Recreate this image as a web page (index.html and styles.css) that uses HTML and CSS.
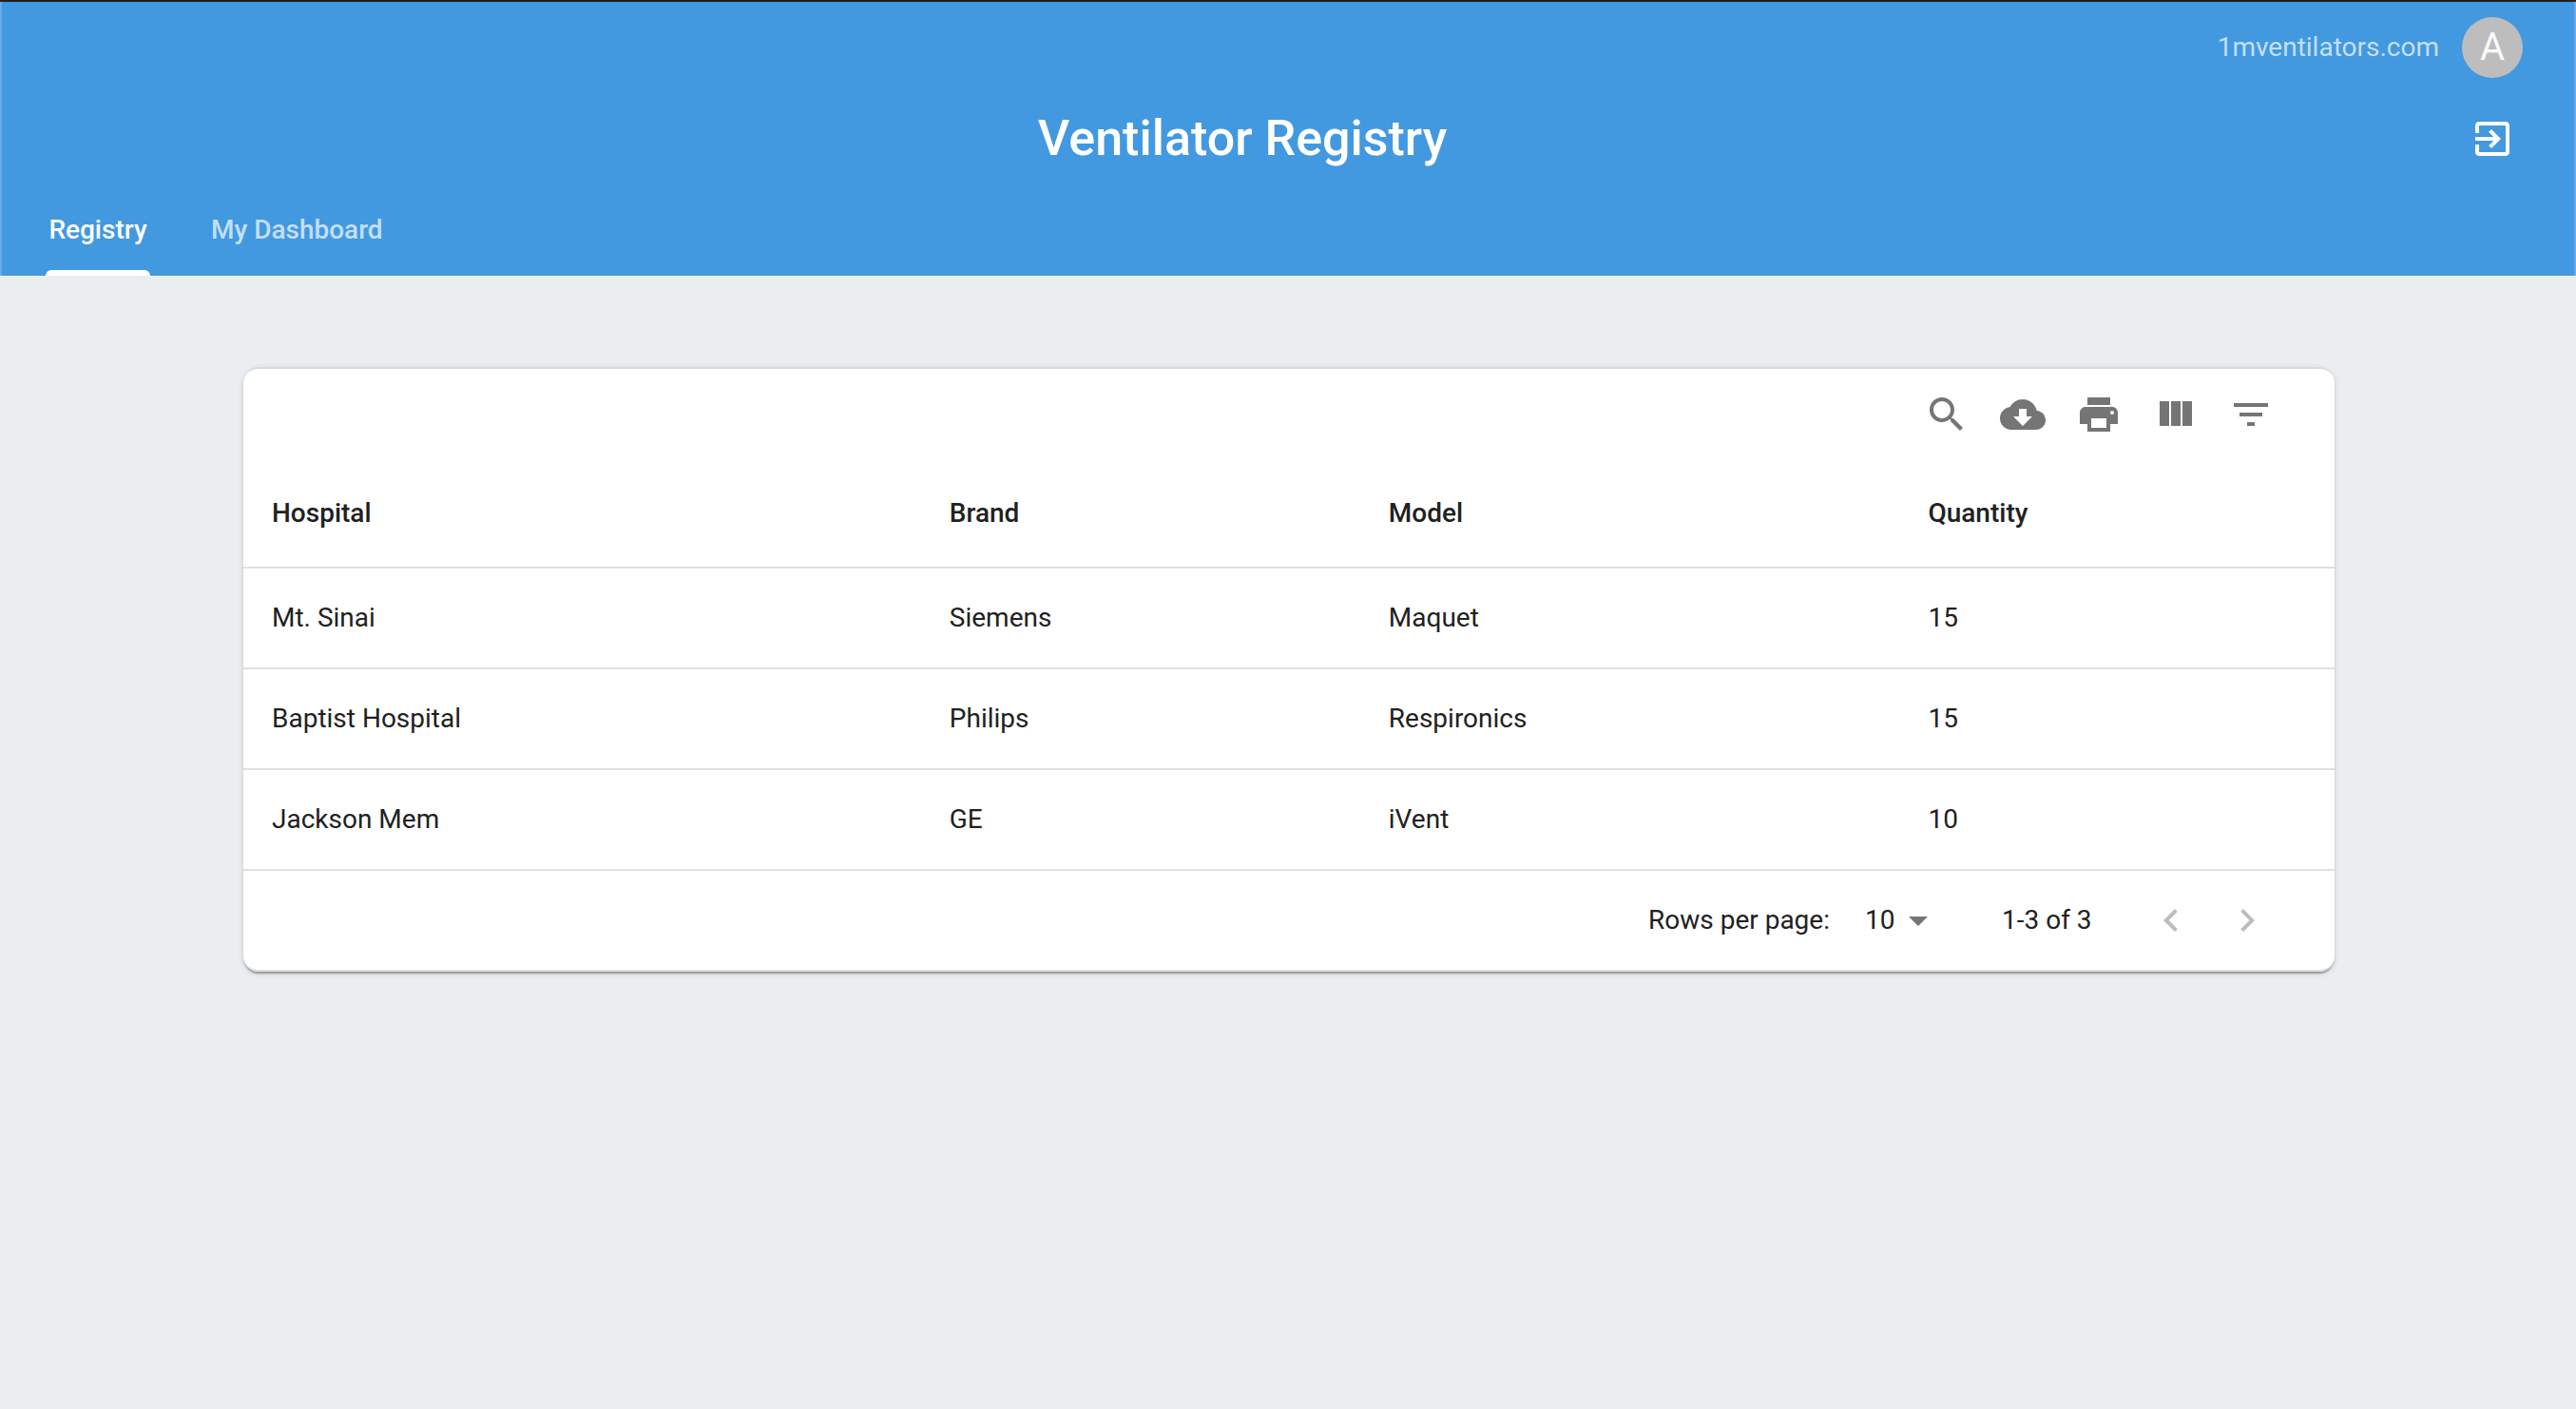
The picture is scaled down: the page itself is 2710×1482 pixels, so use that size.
FILE: index.html
```html
<!DOCTYPE html>
<html lang="en">
<head>
<meta charset="utf-8">
<meta name="viewport" content="width=device-width, initial-scale=1">
<title>Ventilator Registry</title>
<link rel="stylesheet" href="styles.css">
</head>
<body>
<header class="app-header">
  <div class="bar bar-account">
    <a class="site-link" href="#">1mventilators.com</a>
    <button class="avatar" type="button" aria-label="Account">A</button>
  </div>
  <div class="bar bar-title">
    <h1 class="title">Ventilator Registry</h1>
    <button class="icon-button sign-out" type="button" aria-label="Sign out">
      <svg class="icon" viewBox="0 0 24 24"><path d="M10.09 15.59L11.5 17l5-5-5-5-1.41 1.41L12.67 11H3v2h9.67l-2.58 2.59zM19 3H5c-1.11 0-2 .9-2 2v4h2V5h14v14H5v-4H3v4c0 1.1.89 2 2 2h14c1.1 0 2-.9 2-2V5c0-1.1-.9-2-2-2z"/></svg>
    </button>
  </div>
  <nav class="tabs">
    <a class="tab tab-active" href="#" aria-current="page">Registry</a>
    <a class="tab" href="#">My Dashboard</a>
  </nav>
</header>

<main class="content">
  <section class="card">
    <div class="toolbar">
      <button class="icon-button" type="button" aria-label="Search">
        <svg class="icon" viewBox="0 0 24 24"><path d="M15.5 14h-.79l-.28-.27C15.41 12.59 16 11.11 16 9.5 16 5.91 13.09 3 9.5 3S3 5.91 3 9.5 5.91 16 9.5 16c1.61 0 3.09-.59 4.23-1.57l.27.28v.79l5 4.99L20.49 19l-4.99-5zm-6 0C7.01 14 5 11.99 5 9.5S7.01 5 9.5 5 14 7.01 14 9.5 11.99 14 9.5 14z"/></svg>
      </button>
      <button class="icon-button" type="button" aria-label="Download CSV">
        <svg class="icon" viewBox="0 0 24 24"><path d="M19.35 10.04C18.67 6.59 15.64 4 12 4 9.11 4 6.6 5.64 5.35 8.04 2.34 8.36 0 10.91 0 14c0 3.31 2.69 6 6 6h13c2.76 0 5-2.24 5-5 0-2.64-2.05-4.78-4.65-4.96zM17 13l-5 5-5-5h3V9h4v4h3z"/></svg>
      </button>
      <button class="icon-button" type="button" aria-label="Print">
        <svg class="icon" viewBox="0 0 24 24"><path d="M19 8H5c-1.66 0-3 1.34-3 3v6h4v4h12v-4h4v-6c0-1.66-1.34-3-3-3zm-3 11H8v-5h8v5zm3-7c-.55 0-1-.45-1-1s.45-1 1-1 1 .45 1 1-.45 1-1 1zm-1-9H6v4h12V3z"/></svg>
      </button>
      <button class="icon-button" type="button" aria-label="View columns">
        <svg class="icon" viewBox="0 0 24 24"><path d="M10 18h5V5h-5v13zm-6 0h5V5H4v13zM16 5v13h5V5h-5z"/></svg>
      </button>
      <button class="icon-button" type="button" aria-label="Filter table">
        <svg class="icon" viewBox="0 0 24 24"><path d="M10 18h4v-2h-4v2zM3 6v2h18V6H3zm3 7h12v-2H6v2z"/></svg>
      </button>
    </div>

    <table class="registry">
      <colgroup>
        <col class="col-hospital">
        <col class="col-brand">
        <col class="col-model">
        <col>
      </colgroup>
      <thead>
        <tr><th scope="col">Hospital</th><th scope="col">Brand</th><th scope="col">Model</th><th scope="col">Quantity</th></tr>
      </thead>
      <tbody>
        <tr><td>Mt. Sinai</td><td>Siemens</td><td>Maquet</td><td>15</td></tr>
        <tr><td>Baptist Hospital</td><td>Philips</td><td>Respironics</td><td>15</td></tr>
        <tr><td>Jackson Mem</td><td>GE</td><td>iVent</td><td>10</td></tr>
      </tbody>
    </table>

    <div class="pagination">
      <label class="rows-label" for="rows">Rows per page:</label>
      <div class="select-wrap">
        <select id="rows" class="rows-select">
          <option selected>10</option>
          <option>15</option>
          <option>100</option>
        </select>
        <svg class="icon select-arrow" viewBox="0 0 24 24"><path d="M7 10l5 5 5-5z"/></svg>
      </div>
      <span class="range">1-3 of 3</span>
      <div class="pager">
        <button class="icon-button" type="button" disabled aria-label="Previous page">
          <svg class="icon" viewBox="0 0 24 24"><path d="M15.41 7.41L14 6l-6 6 6 6 1.41-1.41L10.83 12z"/></svg>
        </button>
        <button class="icon-button" type="button" disabled aria-label="Next page">
          <svg class="icon" viewBox="0 0 24 24"><path d="M10 6L8.59 7.41 13.17 12l-4.58 4.59L10 18l6-6z"/></svg>
        </button>
      </div>
    </div>
  </section>
</main>
</body>
</html>
```
FILE: styles.css
```css
* {
  box-sizing: border-box;
}

body {
  margin: 0;
  min-height: 100vh;
  border-top: 2px solid #212121;
  background: #eaeef1;
  color: #212121;
  font-family: Roboto, "Liberation Sans", sans-serif;
  font-size: 28px;
  line-height: 40px;
}

button {
  padding: 0;
  border: 0;
  background: none;
  color: inherit;
  font: inherit;
  cursor: pointer;
}

a {
  color: inherit;
  text-decoration: none;
}

.icon {
  display: block;
  width: 48px;
  height: 48px;
  fill: currentColor;
}

.icon-button {
  display: flex;
  align-items: center;
  justify-content: center;
  width: 80px;
  height: 80px;
  border-radius: 50%;
  color: #757575;
}

.icon-button:disabled {
  color: #bdbdbd;
  cursor: default;
}

/* Header */

.app-header {
  background: #4299e0;
  box-shadow: inset 2px 0 #68ade7, inset -2px 0 #68ade7;
  color: #fff;
}

.bar {
  display: flex;
  align-items: center;
  height: 96px;
  padding: 0 48px;
}

.bar-account {
  justify-content: flex-end;
  gap: 24px;
  padding-right: 56px;
}

.site-link {
  color: rgba(255, 255, 255, 0.7);
}

.avatar {
  width: 64px;
  height: 64px;
  border-radius: 50%;
  background: #bdbdbd;
  color: #fafafa;
  font-size: 40px;
}

.title {
  flex: 1;
  margin: 0;
  padding-right: 16px;
  font-size: 52px;
  font-weight: 500;
  line-height: 64px;
  text-align: center;
}

.sign-out {
  color: #fff;
}

.tabs {
  display: flex;
  gap: 64px;
  height: 96px;
  padding: 0 48px;
  font-weight: 500;
}

.tab {
  display: flex;
  align-items: center;
  justify-content: center;
  min-width: 110px;
  color: rgba(255, 255, 255, 0.7);
}

.tab-active {
  position: relative;
  color: #fff;
}

.tab-active::after {
  content: "";
  position: absolute;
  right: 0;
  bottom: 0;
  left: 0;
  height: 6px;
  border-radius: 6px 6px 0 0;
  background: #fff;
}

/* Registry card */

.content {
  padding: 96px 254px 96px 256px;
}

.card {
  border-top: 2px solid #d9dadb;
  border-radius: 16px;
  background: #fff;
  box-shadow:
    0 4px 2px -2px rgba(0, 0, 0, 0.2),
    0 2px 2px rgba(0, 0, 0, 0.14),
    0 2px 6px rgba(0, 0, 0, 0.12);
}

.toolbar {
  display: flex;
  align-items: center;
  justify-content: flex-end;
  height: 96px;
  padding: 0 48px;
}

.registry {
  width: 100%;
  border-collapse: separate;
  border-spacing: 0;
  table-layout: fixed;
}

.col-hospital {
  width: 32.4%;
}

.col-brand {
  width: 21%;
}

.col-model {
  width: 25.8%;
}

.registry th,
.registry td {
  height: 106px;
  padding: 0 30px;
  border-bottom: 2px solid #e0e0e0;
  text-align: left;
}

.registry th {
  height: 114px;
  font-weight: 500;
}

.pagination {
  display: flex;
  align-items: center;
  justify-content: flex-end;
  height: 106px;
  padding-right: 52px;
  border-bottom: 2px solid #e0e0e0;
  border-radius: 0 0 16px 16px;
}

.rows-label {
  min-width: 196px;
}

.select-wrap {
  position: relative;
  margin: 0 64px 0 32px;
}

.rows-select {
  display: block;
  width: 80px;
  height: 48px;
  padding: 0;
  border: 0;
  appearance: none;
  background: none;
  color: inherit;
  font: inherit;
}

.select-arrow {
  position: absolute;
  top: 0;
  right: 0;
  color: #757575;
  pointer-events: none;
}

.range {
  min-width: 98px;
}

.pager {
  display: flex;
  margin-left: 40px;
}
```
